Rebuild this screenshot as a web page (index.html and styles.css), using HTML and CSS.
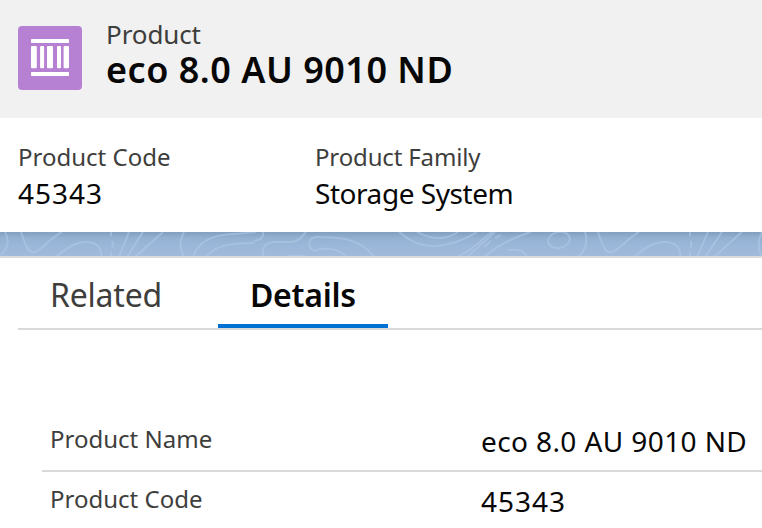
FILE: index.html
```html
<!DOCTYPE html>
<html lang="en">
<head>
<meta charset="utf-8">
<title>Product</title>
<link rel="stylesheet" href="styles.css">
</head>
<body>
<header class="page-header">
  <div class="product-icon">
    <svg viewBox="0 0 64 64" width="64" height="64" fill="#fff">
      <rect x="13" y="13" width="38" height="4" rx=".8"/>
      <rect x="13" y="20" width="5.8" height="22.3" rx="1"/>
      <rect x="22.1" y="20" width="4" height="22.3" rx="1"/>
      <rect x="29" y="20" width="6" height="22.3" rx="1"/>
      <rect x="39" y="20" width="4" height="22.3" rx="1"/>
      <rect x="45.6" y="20" width="5.4" height="22.3" rx="1"/>
      <rect x="13" y="46" width="38" height="4" rx=".8"/>
    </svg>
  </div>
  <div class="heading">
    <p class="entity">Product</p>
    <h1 class="title">eco 8.0 AU 9010 ND</h1>
  </div>
</header>
<section class="highlights">
  <div class="highlight">
    <p class="label">Product Code</p>
    <p class="value number">45343</p>
  </div>
  <div class="highlight">
    <p class="label family">Product Family</p>
    <p class="value system">Storage System</p>
  </div>
</section>
<div class="band">
  <svg viewBox="0 0 762 24" width="762" height="24" fill="none" stroke="#b3cbe8" stroke-opacity=".55" stroke-width="2">
    <path d="M5 0C10 9 8 18 0 23"/>
    <path d="M21 0C26 15 29 22 35 20C43 17 49 7 62 0"/>
    <path d="M56 25C67 15 78 10 86 10C97 10 102 16 101 25"/>
    <path d="M111 0V4M112.500 9V16M111 20V24M129 0L119 25M143 0L127 25M163 0L135 25"/>
    <path d="M184 0C179 9 180 18 184 25M193 25C197 12 210 3 233 2C244 1 250 1 256 0M206 25C214 14 229 11 254 11M254 9C261 8 264 5 263 0M263 25C261 13 267 10 277 10H288C299 10 302 5 306 0"/>
    <path d="M347 25C339 17 324 14 314 19C307 15 308 5 317 5C339 5 360 6 374 25M284 25Q297 22 308 25"/>
    <path d="M399 0C413 12 425 15 436 14C451 13 466 7 477 0M417 0C431 8 447 8 458 0M457 25C474 17 482 7 492 0M467 25L495 0M484 15L491 9M495 6L501 3M484 25C500 12 514 5 531 0"/>
    <path d="M508 18C518 17 526 19 526 25"/>
    <ellipse cx="559" cy="8" rx="11" ry="8" transform="rotate(-12 559 8)"/>
    <path d="M585 0C588 9 586 18 578 25M598 0C603 15 606 22 612 20C620 17 627 7 639 0M634 25C645 15 656 10 664 10C676 10 681 16 680 25M690 0V4M691 9V16M690 20V24M708 0L697 25M722 0L705 25M742 0L714 25M762 0C757 9 758 18 762 24"/>
  </svg>
</div>
<main class="card">
  <nav class="tabs">
    <a class="tab">Related</a>
    <a class="tab active">Details</a>
  </nav>
  <div class="fields">
    <div class="field">
      <span class="label">Product Name</span>
      <span class="value long">eco 8.0 AU 9010 ND</span>
    </div>
    <div class="field">
      <span class="label">Product Code</span>
      <span class="value number">45343</span>
    </div>
  </div>
</main>
</body>
</html>
```
FILE: styles.css
```css
* { box-sizing: border-box; }
body {
  margin: 0;
  width: 762px;
  height: 528px;
  overflow: hidden;
  background: #fff;
  color: #080707;
  font-family: "Noto Sans", "Open Sans", sans-serif;
}
p, h1 { margin: 0; white-space: nowrap; }
.page-header {
  display: flex;
  gap: 24px;
  height: 118px;
  padding: 18px 18px 0;
  background: #f1f1f1;
}
.product-icon {
  width: 64px;
  height: 64px;
  margin-top: 8px;
  border-radius: 4px;
  background: #b781d3;
}
.product-icon svg, .band svg { display: block; }
.entity {
  font-size: 26px;
  line-height: 32px;
  letter-spacing: -.1px;
  color: #3e3e3c;
}
.title {
  margin-top: 2px;
  font-size: 36px;
  line-height: 36px;
  letter-spacing: .5px;
  font-weight: 600;
}
.highlights {
  display: grid;
  grid-template-columns: 297px 1fr;
  height: 114px;
  padding: 23px 18px 0;
}
.label {
  font-size: 24px;
  line-height: 32px;
  color: #3e3e3c;
}
.family { letter-spacing: -.15px; }
.value {
  font-size: 28px;
  line-height: 36px;
}
.number { letter-spacing: 1px; }
.system { letter-spacing: -.45px; }
.long { letter-spacing: .4px; }
.highlight .label { margin-bottom: 2px; }
.band {
  height: 24px;
  background: linear-gradient(#819fbf, #94b1d2 25%, #9bb7d9 60%, #9fbadb);
}
.card {
  height: 272px;
  padding-left: 18px;
  border-top: 2px solid #dddbda;
}
.tabs {
  display: flex;
  height: 72px;
  border-bottom: 2px solid #d9d9d9;
}
.tab {
  width: 200px;
  padding: 15px 0 0 32px;
  font-size: 32px;
  line-height: 44px;
  letter-spacing: -.2px;
  color: #3e3e3c;
}
.tab.active {
  width: 170px;
  border-bottom: 4px solid #0070d2;
  color: #080707;
  font-weight: 600;
  letter-spacing: -.3px;
}
.fields { padding: 82px 0 0 24px; }
.field {
  display: grid;
  grid-template-columns: 431px 1fr;
  height: 60px;
  padding: 11px 0 0 8px;
  border-bottom: 2px solid #d9d9d9;
  white-space: nowrap;
}
```
